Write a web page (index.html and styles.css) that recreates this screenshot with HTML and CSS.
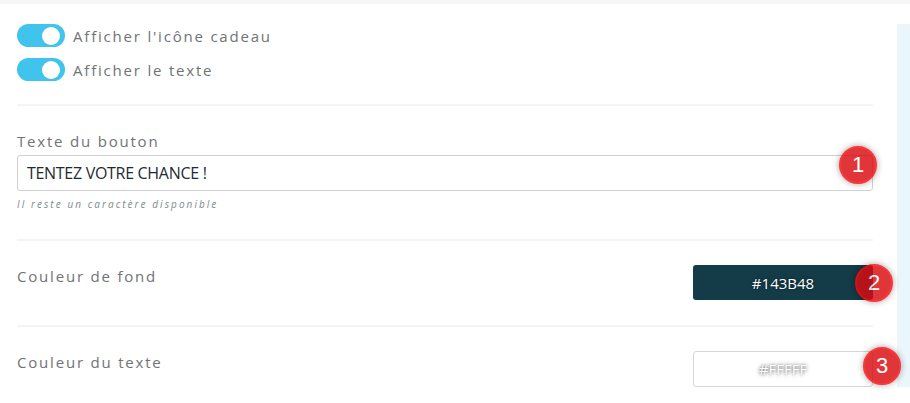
FILE: index.html
```html
<!DOCTYPE html>
<html lang="fr">
<head>
<meta charset="utf-8">
<title>Bouton</title>
<link rel="stylesheet" href="styles.css">
</head>
<body>
<div class="topbar"></div>
<div class="layout">
  <main class="panel">
    <section class="section toggles">
      <label class="toggle-row"><span class="toggle"><span class="knob"></span></span><span class="toggle-label">Afficher l'icône cadeau</span></label>
      <label class="toggle-row"><span class="toggle"><span class="knob"></span></span><span class="toggle-label">Afficher le texte</span></label>
    </section>
    <section class="section">
      <div class="field-label">Texte du bouton</div>
      <div class="badge-wrap">
        <div class="text-input">TENTEZ VOTRE CHANCE !</div>
        <span class="badge badge-1">1</span>
      </div>
      <div class="helper">Il reste un caractère disponible</div>
    </section>
    <section class="section color-row">
      <div class="field-label">Couleur de fond</div>
      <div class="badge-wrap">
        <div class="swatch swatch-dark">#143B48</div>
        <span class="badge badge-2">2</span>
      </div>
    </section>
    <section class="section color-row last">
      <div class="field-label">Couleur du texte</div>
      <div class="badge-wrap">
        <div class="swatch swatch-light">#FFFFF</div>
        <span class="badge badge-3">3</span>
      </div>
    </section>
  </main>
  <aside class="aside"></aside>
</div>
</body>
</html>
```

FILE: styles.css
```css
html, body {
  margin: 0;
  padding: 0;
  background: #ffffff;
  overflow: hidden;
}

body {
  font-family: "Open Sans", "Liberation Sans", sans-serif;
  width: 910px;
  height: 403px;
}

.topbar {
  height: 4px;
  background: #f6f6f6;
}

.layout {
  display: flex;
  align-items: flex-start;
}

.panel {
  flex: 1;
  padding: 0 24px 0 17px;
  position: relative;
  z-index: 1;
}

.aside {
  width: 13px;
  height: 363px;
  margin-top: 20px;
  background: #eaf6fc;
}

.section {
  border-bottom: 2px solid #f4f4f4;
  padding: 25px 0 28px;
}

.section.toggles {
  padding: 20px 0 23px;
  display: flex;
  flex-direction: column;
  gap: 11px;
}

.toggle-row {
  display: flex;
  align-items: center;
  gap: 8px;
  height: 23px;
}

.toggle {
  width: 48px;
  height: 23px;
  border-radius: 12px;
  background: #40c4ed;
  display: flex;
  align-items: center;
  justify-content: flex-end;
  padding-right: 5px;
  box-sizing: border-box;
}

.knob {
  width: 18px;
  height: 18px;
  border-radius: 50%;
  background: #ffffff;
}

.toggle-label,
.field-label {
  font-family: "Open Sans", sans-serif;
  font-size: 15px;
  letter-spacing: 1.8px;
  color: #707376;
  line-height: 20px;
}

.field-label {
  margin-bottom: 4px;
}

.badge-wrap {
  position: relative;
}

.text-input {
  height: 36px;
  box-sizing: border-box;
  border: 1px solid #d2d2d2;
  border-radius: 3px;
  padding: 0 9px;
  display: flex;
  align-items: center;
  font-size: 16px;
  letter-spacing: -0.3px;
  color: #1e2a33;
}

.helper {
  margin-top: 6px;
  font-family: "Open Sans", sans-serif;
  font-style: italic;
  font-size: 10px;
  line-height: 14px;
  letter-spacing: 2.05px;
  color: #7d8a8c;
}

.color-row {
  display: flex;
  justify-content: space-between;
  align-items: flex-start;
  padding: 24px 0 25px;
}

.color-row .field-label {
  margin-top: 1px;
}

.color-row.last {
  border-bottom: none;
  padding-bottom: 0;
}

.swatch {
  width: 180px;
  box-sizing: border-box;
  border-radius: 3px;
  display: flex;
  align-items: center;
  justify-content: center;
  font-size: 15px;
}

.swatch-dark {
  height: 35px;
  background: #143b48;
  color: #ffffff;
  text-shadow: 0 0 3px rgba(0, 0, 0, 0.6);
}

.swatch-light {
  height: 36px;
  border: 1px solid #d6d6d6;
  background: #ffffff;
  color: #ffffff;
  text-shadow: 0 0 4px rgba(0, 0, 0, 0.6), 0 0 2px rgba(0, 0, 0, 0.3);
}

.badge {
  position: absolute;
  width: 38px;
  height: 38px;
  box-sizing: border-box;
  border-radius: 50%;
  background: #da0a10;
  border: 2px solid #ff0a0a;
  box-shadow: 0 0 6px rgba(0, 0, 0, 0.45);
  opacity: 0.82;
  color: #ffffff;
  font-family: "Liberation Sans", Arial, sans-serif;
  font-size: 22px;
  display: flex;
  align-items: center;
  justify-content: center;
  z-index: 2;
}

.badge-1 {
  right: -4px;
  top: -9px;
}

.badge-2 {
  right: -20px;
  top: -1px;
}

.badge-3 {
  right: -28px;
  top: -4px;
}
```
